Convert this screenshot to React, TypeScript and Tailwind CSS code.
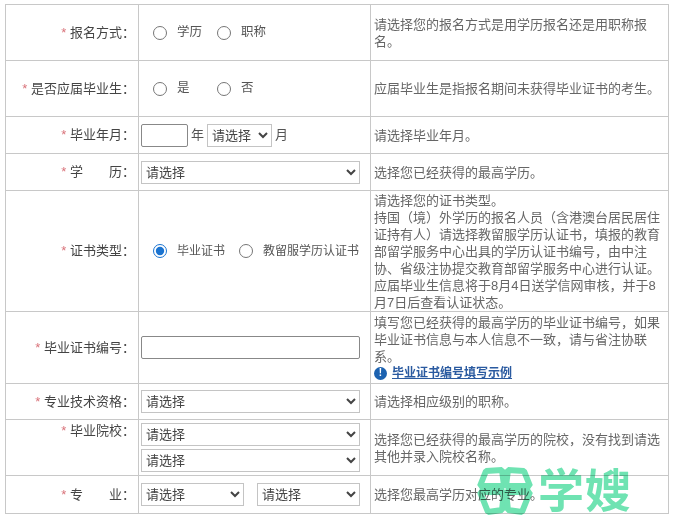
const labelCls = "border border-[#c8c8c8] pr-[3px] text-right text-[13px] text-[#444]"
const fieldCls = "border border-[#c8c8c8] pl-[2px] pr-[8px]"
const noteCls = "border border-[#c8c8c8] pl-[3px] pr-[3px] text-[13px] leading-[17px] text-[#666]"
const selectCls = "h-[23px] border border-[#c4c4c4] bg-white pl-0 text-[13px] text-[#444]"

function Label({ text, className = "" }: { text: string; className?: string }) {
  return (
    <td className={`${labelCls} ${className}`}>
      <span className="text-[#d9737a]">*</span> {text}：
    </td>
  )
}

function Radio({ label, checked, width }: { label: string; checked?: boolean; width: string }) {
  return (
    <label className={`flex items-center gap-[10px] whitespace-nowrap ${width}`}>
      <input type="radio" name={label} defaultChecked={checked} className="m-0 h-[14px] w-[14px] accent-[#1a73d0]" />
      <span>{label}</span>
    </label>
  )
}

function Select({ className }: { className: string }) {
  return (
    <select className={`${selectCls} ${className}`}>
      <option>请选择</option>
    </select>
  )
}

export default function App() {
  return (
    <div
      className="relative h-[517px] w-[674px] overflow-hidden bg-white pl-[5px] pt-[4px]"
      style={{ fontFamily: '"Liberation Sans", "Noto Sans CJK SC", sans-serif' }}
    >
      <table className="w-[663px] table-fixed border-collapse">
        <colgroup>
          <col className="w-[133px]" />
          <col className="w-[232px]" />
          <col className="w-[298px]" />
        </colgroup>
        <tbody>
          <tr className="h-[56px]">
            <Label text="报名方式" />
            <td className={fieldCls}>
              <div className="flex pl-[12px] text-[12.5px] text-[#555]">
                <Radio label="学历" width="w-[64px]" />
                <Radio label="职称" width="w-[64px]" />
              </div>
            </td>
            <td className={noteCls}>请选择您的报名方式是用学历报名还是用职称报名。</td>
          </tr>
          <tr className="h-[56px]">
            <Label text="是否应届毕业生" />
            <td className={fieldCls}>
              <div className="flex pl-[12px] text-[12.5px] text-[#555]">
                <Radio label="是" width="w-[64px]" />
                <Radio label="否" width="w-[64px]" />
              </div>
            </td>
            <td className={noteCls}>应届毕业生是指报名期间未获得毕业证书的考生。</td>
          </tr>
          <tr className="h-[37px]">
            <Label text="毕业年月" />
            <td className={fieldCls}>
              <div className="flex items-center gap-[3px] text-[13px] text-[#555]">
                <input className="h-[23px] w-[47px] rounded-[2px] border border-[#888] bg-white" />
                <span>年</span>
                <Select className="w-[65px]" />
                <span>月</span>
              </div>
            </td>
            <td className={noteCls}>请选择毕业年月。</td>
          </tr>
          <tr className="h-[37px]">
            <Label text="学　　历" />
            <td className={fieldCls}>
              <Select className="block w-[219px]" />
            </td>
            <td className={noteCls}>选择您已经获得的最高学历。</td>
          </tr>
          <tr className="h-[121px]">
            <Label text="证书类型" />
            <td className={fieldCls}>
              <div className="flex pl-[12px] text-[12px] text-[#555]">
                <Radio label="毕业证书" checked width="w-[86px]" />
                <Radio label="教留服学历认证书" width="w-[120px]" />
              </div>
            </td>
            <td className={noteCls}>
              请选择您的证书类型。
              <br />
              持国（境）外学历的报名人员（含港澳台居民居住证持有人）请选择教留服学历认证书，填报的教育部留学服务中心出具的学历认证书编号，由中注协、省级注协提交教育部留学服务中心进行认证。
              <br />
              应届毕业生信息将于8月4日送学信网审核，并于8月7日后查看认证状态。
            </td>
          </tr>
          <tr className="h-[72px]">
            <Label text="毕业证书编号" />
            <td className={fieldCls}>
              <input className="block h-[23px] w-[219px] rounded-[2px] border border-[#888] bg-white" />
            </td>
            <td className={noteCls}>
              填写您已经获得的最高学历的毕业证书编号，如果毕业证书信息与本人信息不一致，请与省注协联系。
              <div className="flex items-center gap-[5px]">
                <span className="flex h-[13px] w-[13px] items-center justify-center rounded-full bg-[#1c62b0] text-[10px] font-bold leading-none text-white">
                  !
                </span>
                <a className="text-[12px] font-bold text-[#2a5aa0] underline">毕业证书编号填写示例</a>
              </div>
            </td>
          </tr>
          <tr className="h-[36px]">
            <Label text="专业技术资格" />
            <td className={fieldCls}>
              <Select className="block w-[219px]" />
            </td>
            <td className={noteCls}>请选择相应级别的职称。</td>
          </tr>
          <tr className="h-[56px]">
            <Label text="毕业院校" className="pt-[1px] align-top" />
            <td className={fieldCls}>
              <div className="flex flex-col gap-[3px]">
                <Select className="block w-[219px]" />
                <Select className="block w-[219px]" />
              </div>
            </td>
            <td className={noteCls}>选择您已经获得的最高学历的院校，没有找到请选其他并录入院校名称。</td>
          </tr>
          <tr className="h-[38px]">
            <Label text="专　　业" />
            <td className={fieldCls}>
              <div className="flex gap-[13px]">
                <Select className="w-[103px]" />
                <Select className="w-[103px]" />
              </div>
            </td>
            <td className={noteCls}>选择您最高学历对应的专业。</td>
          </tr>
        </tbody>
      </table>
      {/* 水印 */}
      <div className="absolute left-[476px] top-[466px] flex items-center gap-[4px] text-[#6fe3b2] mix-blend-multiply">
        <svg width="58" height="50" viewBox="0 0 58 50" fill="none" stroke="currentColor" strokeWidth="6" strokeLinejoin="bevel">
          <path d="M10 5 26 4 28 20 4 20Z" />
          <path d="M32 4 48 5 54 20 30 20Z" />
          <path d="M4 26 28 26 26 44 12 46Z" />
          <path d="M30 26 54 26 46 46 32 44Z" />
        </svg>
        <span className="text-[46px] font-bold leading-none tracking-[1px]">学嫂</span>
      </div>
    </div>
  )
}
